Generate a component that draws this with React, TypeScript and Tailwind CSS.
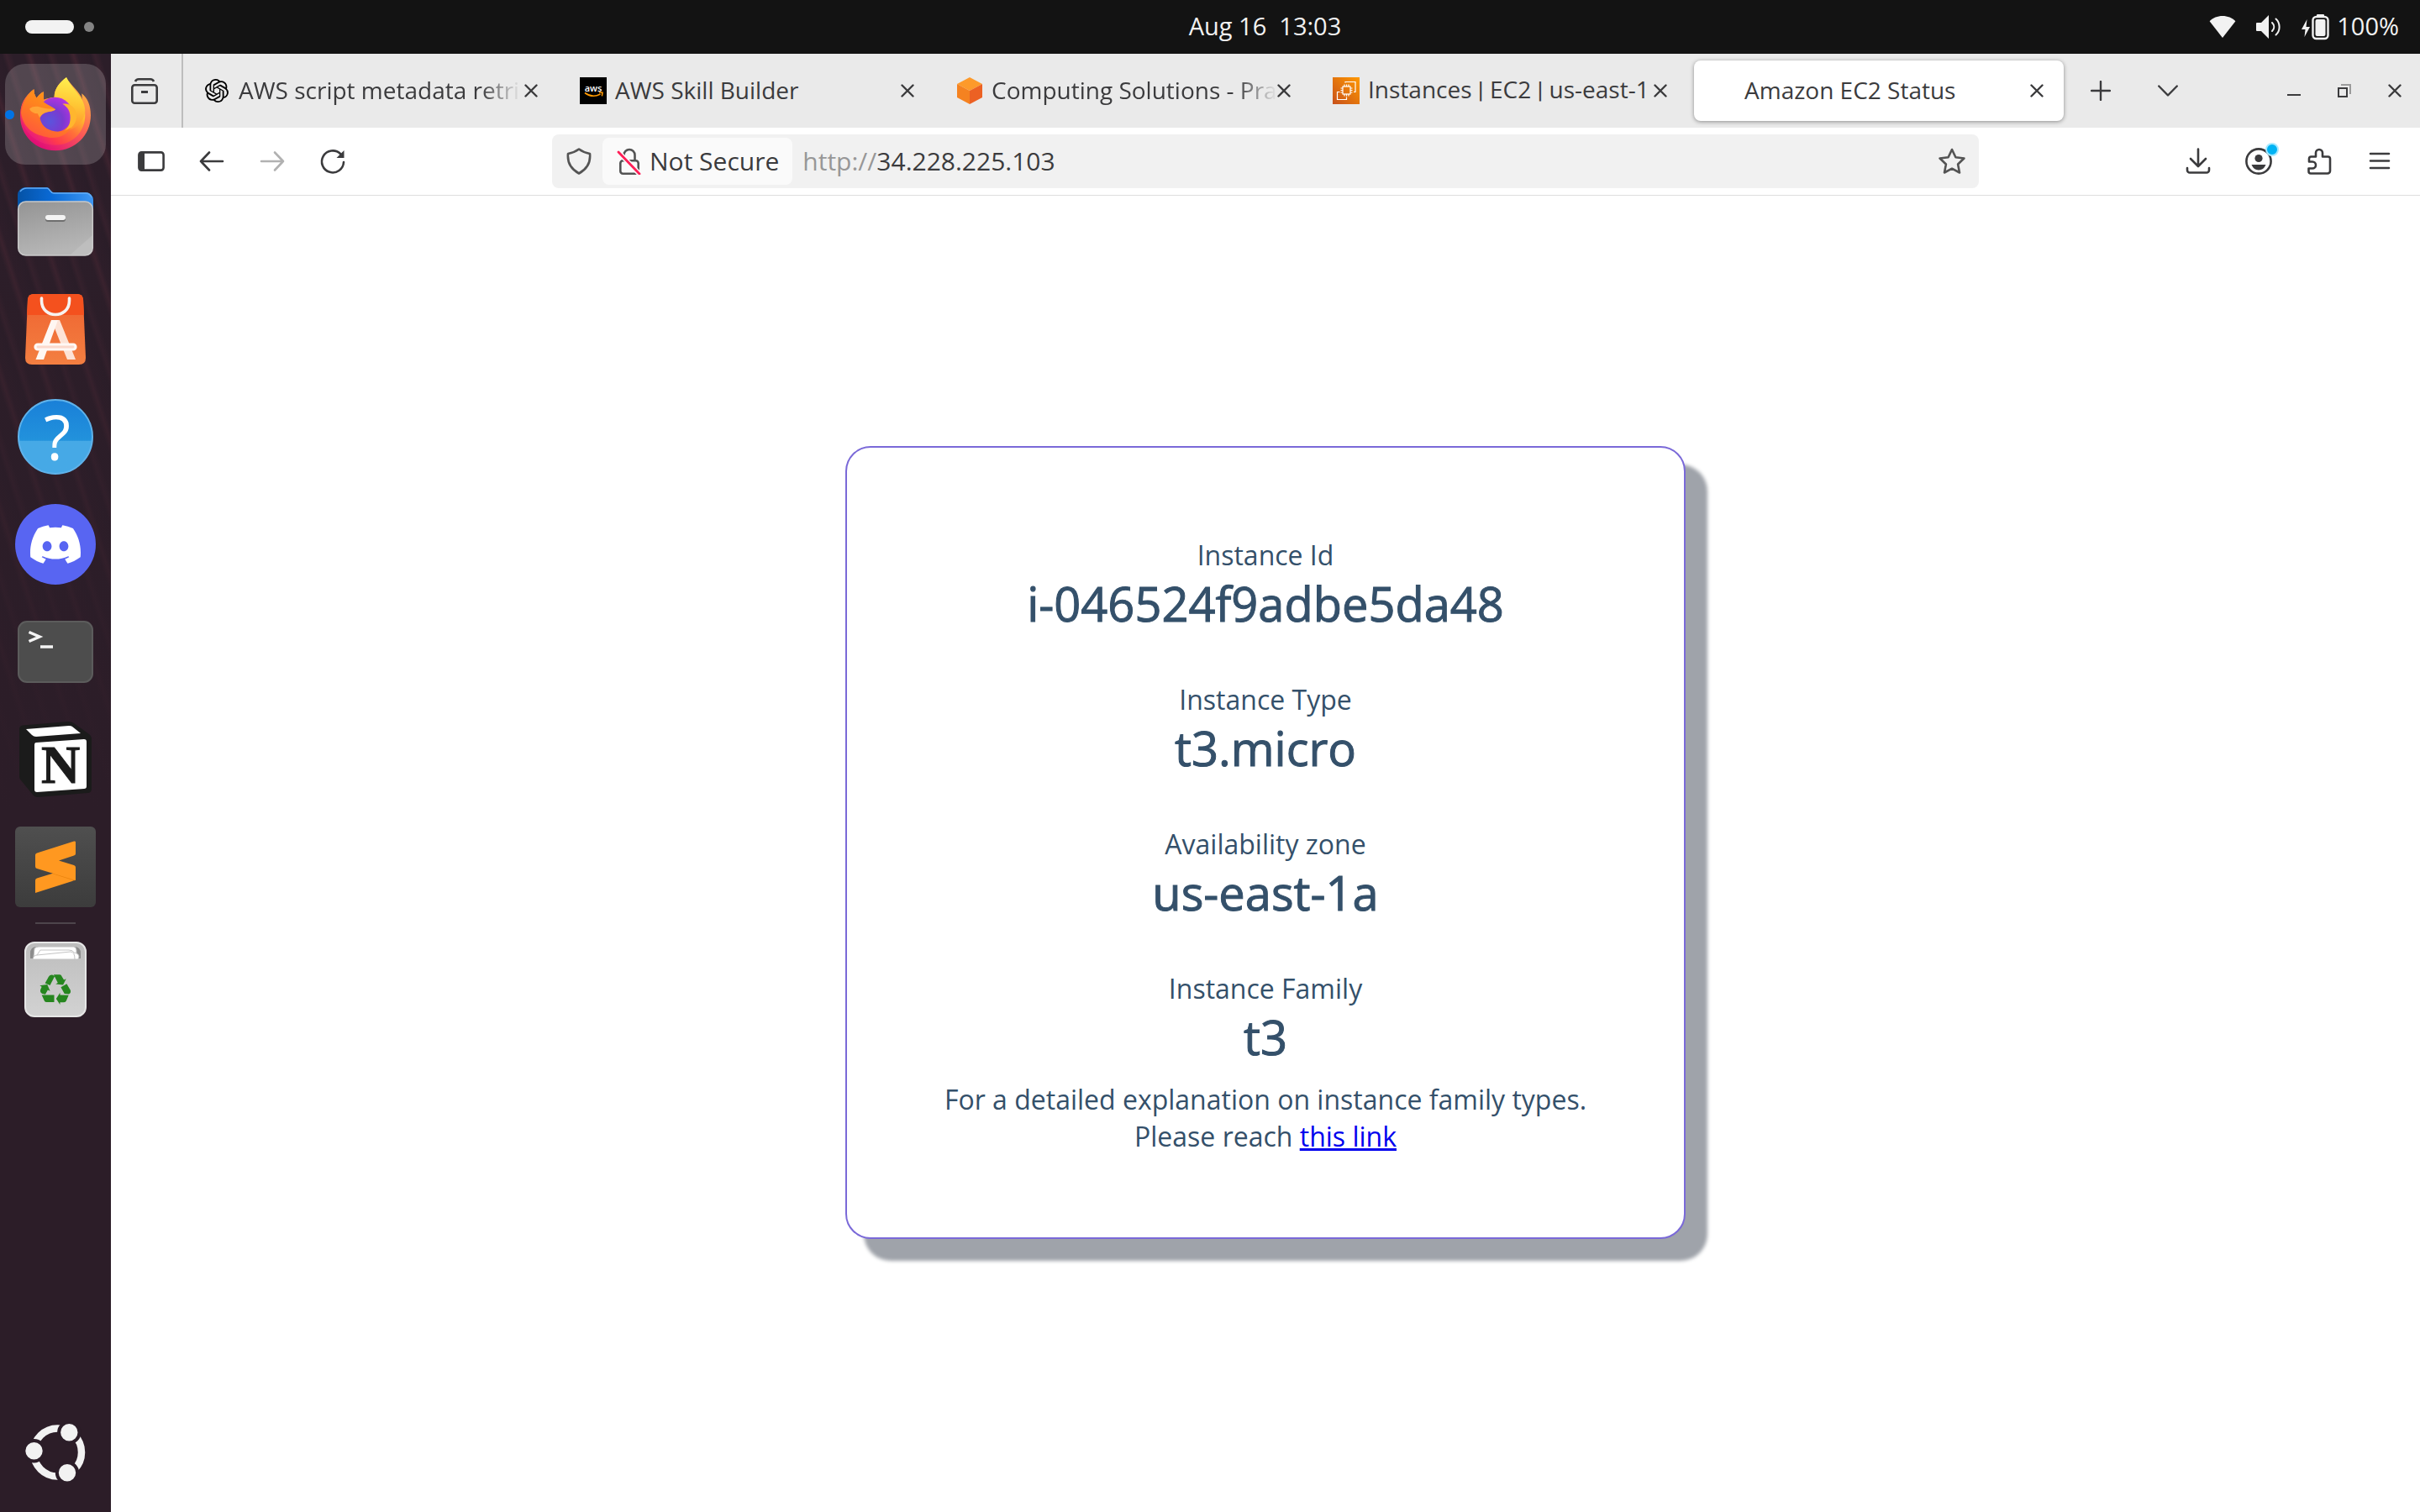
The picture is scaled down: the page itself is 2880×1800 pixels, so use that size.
import type { ReactNode } from "react";
import { SiOpenai, SiDiscord } from "react-icons/si";

const ink = "#3b3b3d";

function CrossIcon() {
  return (
    <svg className="size-4" viewBox="0 0 16 16" fill="none" stroke={ink} strokeWidth="2.4" strokeLinecap="round" aria-hidden="true">
      <path d="M1.5 1.5 14.5 14.5M14.5 1.5 1.5 14.5" />
    </svg>
  );
}

/* ---------- Top bar ---------- */

function TopBar() {
  return (
    <header className="grid h-16 shrink-0 grid-cols-3 items-center bg-[#131313] text-[29px] leading-9 text-[#f2f2f2]">
      <button aria-label="Activities" className="flex items-center gap-3 pl-[30px]">
        <span className="h-4 w-[58px] rounded-full bg-[#f2f2f2]" />
        <span className="size-3 rounded-full bg-[#848484]" />
      </button>
      <button className="justify-self-center pb-0.5 pl-[131px] whitespace-pre">Aug 16  13:03</button>
      <button aria-label="System status" className="flex items-center justify-self-end pr-[25px]">
        <svg className="mr-6 h-[26px] w-8" viewBox="0 0 32 26" fill="#f2f2f2" aria-hidden="true">
          <path d="M16 26 .6 6.2C4.600 2.200 10 0 16 0s11.400 2.200 15.400 6.200Z" />
        </svg>
        <svg className="mr-6 h-[30px] w-[30px]" viewBox="0 0 30 30" fill="none" aria-hidden="true">
          <path d="M1 10h5l9-9v28l-9-9H1a1 1 0 0 1-1-1v-8a1 1 0 0 1 1-1Z" fill="#f2f2f2" />
          <path d="M19 10c3 3 3 7 0 10M23.500 5.500c5.500 5 5.500 14 0 19" stroke="#f2f2f2" strokeWidth="2" strokeLinecap="round" />
        </svg>
        <svg className="mr-2 h-8 w-[34px]" viewBox="0 0 34 32" fill="none" aria-hidden="true">
          <path d="M6.500 7 0 19h4.500L3.500 28 10 16H5.500Z" fill="#f2f2f2" />
          <rect x="18" y="1" width="9" height="4" rx="1" fill="#f2f2f2" />
          <rect x="13.500" y="4" width="18" height="26" rx="4" stroke="#f2f2f2" strokeWidth="2.400" />
          <rect x="16.500" y="7" width="12" height="20" rx="2" fill="#f2f2f2" />
        </svg>
        <span className="pb-0.5">100%</span>
      </button>
    </header>
  );
}

/* ---------- Dock icons ---------- */

function FirefoxIcon() {
  return (
    <svg className="h-[88px] w-[84px]" viewBox="72 92 252 264" aria-hidden="true">
      <defs>
        <linearGradient id="ffBody" x1="0.850" y1="0.100" x2="0.200" y2="0.950">
          <stop offset="0" stopColor="#fff44f" />
          <stop offset="0.300" stopColor="#ffbe2e" />
          <stop offset="0.550" stopColor="#ff7139" />
          <stop offset="0.800" stopColor="#ff3a4c" />
          <stop offset="1" stopColor="#e31587" />
        </linearGradient>
        <radialGradient id="ffGlobe" cx="0.350" cy="0.700" r="0.750">
          <stop offset="0" stopColor="#5b54dc" />
          <stop offset="0.500" stopColor="#7a3ad0" />
          <stop offset="1" stopColor="#b833e1" />
        </radialGradient>
        <linearGradient id="ffFace" x1="0" y1="1" x2="0.600" y2="0">
          <stop offset="0" stopColor="#ff4a45" />
          <stop offset="0.600" stopColor="#ff8020" />
          <stop offset="1" stopColor="#ff9a16" />
        </linearGradient>
        <linearGradient id="ffTail" x1="0.500" y1="0" x2="0.400" y2="1">
          <stop offset="0" stopColor="#fff050" />
          <stop offset="0.500" stopColor="#ffc634" />
          <stop offset="1" stopColor="#ff8a2c" />
        </linearGradient>
        <linearGradient id="ffRim" x1="1" y1="0" x2="0.300" y2="1">
          <stop offset="0" stopColor="#ffd83c" />
          <stop offset="0.500" stopColor="#ff6a50" />
          <stop offset="1" stopColor="#e00a78" />
        </linearGradient>
      </defs>
      <path d="M121 135C88 160 72 192 72 230c0 70 56 124 126 124s126-55 126-126c0-34-11-62-32-78 0 8 1 16 3 22-12-30-40-48-58-79-22 16-43 38-43 70-14 1-26 5-38 9l-1-28c-10 6-18 13-24 22-7-8-10-18-10-31Z" fill="url(#ffRim)" />
      <path d="M121 135C88 160 72 190 74 222c6 64 56 112 122 112 62 0 108-46 108-108 0-58-46-90-67-133-22 16-43 38-43 70-14 1-26 5-38 9l-1-28c-10 6-18 13-24 22-7-8-10-18-10-31Z" fill="url(#ffBody)" />
      <path d="M237 93c-22 16-42 38-43 70 18 2 50 10 62 42 9 28 4 50-14 78 34-12 62-38 62-72-2-52-50-76-67-118Z" fill="url(#ffTail)" />
      <circle cx="197" cy="225" r="62" fill="url(#ffGlobe)" />
      <path d="M223 187c34-4 52 20 50 50-3 28-26 46-50 50 18-10 28-26 28-52 0-22-10-38-28-48Z" fill="#ffb62e" />
      <path d="M121 135c-24 17-42 50-46 84 10 60 50 80 100 88 35 4 65-10 78-36-40 28-100 16-110-31 1-14 12-22 30-25 12-2 23-4 25-9-14-10-28-14-43-26v-36c-10 6-18 13-24 22-7-8-10-18-10-31Z" fill="url(#ffFace)" />
      <path d="M105 205c14-12 32-9 46-4 15 5 30 3 47 5-5 8-20 8-32 11-12 4-19 9-24 19-3-5-6-9-7-14-14-1-24-6-30-17Z" fill="#ffa436" />
    </svg>
  );
}

function FilesIcon() {
  return (
    <svg className="h-[84px] w-[92px]" viewBox="0 0 92 84" aria-hidden="true">
      <defs>
        <linearGradient id="fBack" x1="0" x2="1">
          <stop offset="0" stopColor="#0552a5" />
          <stop offset="0.450" stopColor="#0a6ad6" />
          <stop offset="1" stopColor="#3f97f3" />
        </linearGradient>
        <linearGradient id="fFront" x1="0" y1="0" x2="0.300" y2="1">
          <stop offset="0" stopColor="#949494" />
          <stop offset="1" stopColor="#b6b6b6" />
        </linearGradient>
      </defs>
      <path d="M1 10a9 9 0 0 1 9-9h26c3 0 4 6 8 6h38a9 9 0 0 1 9 9v30H1Z" fill="url(#fBack)" />
      <path d="M4 6q3-4 8-4h24c3 0 4 6 8 6h38q5 0 7 5" fill="none" stroke="#62abf4" strokeWidth="1.500" />
      <rect x="1.700" y="18" width="88.600" height="64" rx="9" fill="url(#fFront)" stroke="#c9c9c9" strokeWidth="1.500" />
      <path d="M64 81 90 58v14q0 9-9 9Z" fill="#fff" opacity="0.120" />
      <rect x="34" y="35" width="24" height="7" rx="3" fill="#6e6e6e" />
      <rect x="34" y="34" width="24" height="6" rx="3" fill="#f4f4f4" />
    </svg>
  );
}

function SoftwareIcon() {
  return (
    <svg className="h-[84px] w-[72px]" viewBox="0 0 72 84" fill="none" aria-hidden="true">
      <defs>
        <linearGradient id="bag" x1="0" y1="0" x2="0" y2="1">
          <stop offset="0" stopColor="#ef6330" />
          <stop offset="1" stopColor="#f37f41" />
        </linearGradient>
      </defs>
      <path d="M10 0h52q6 0 7 6l3 70q0 8-8 8H8q-8 0-8-8L3 6q1-6 7-6Z" fill="url(#bag)" />
      <path d="M10 0h52q6 0 7 6l1 19H2L3 6q1-6 7-6Z" fill="#f4511e" />
      <path d="M19.500 5v3c0 22 33 22 33 0V5" stroke="#f7f3f0" strokeWidth="3.600" strokeLinecap="round" />
      <path d="M32 31h9l19 47h-10L33.500 37Z" fill="#fde3d6" />
      <path d="M31 31h8L22 78h-9.500Z" fill="#fff7f2" />
      <rect x="12" y="60" width="48" height="6" rx="3" fill="#fbd9cc" stroke="#fff8f4" strokeWidth="3.200" />
    </svg>
  );
}

function HelpIcon() {
  return (
    <span className="flex size-[90px] items-center justify-center rounded-full border-2 border-[#5fb2ea] bg-linear-to-b from-[#1a80d8] from-0% via-[#2292dc] via-55% to-[#46a9e6] to-56% pl-1 text-[74px] leading-none text-white">
      ?
    </span>
  );
}

function DiscordIcon() {
  return (
    <span className="flex size-24 items-center justify-center rounded-full bg-[#5865f2] text-white">
      <SiDiscord className="size-[60px]" />
    </span>
  );
}

function TerminalIcon() {
  return (
    <span className="block h-[74px] w-[90px] rounded-[11px] border-2 border-[#5c5c5c] bg-[#4d4d4d]">
      <svg className="size-full" viewBox="0 0 86 70" fill="none" stroke="#f4f4f4" strokeWidth="3.500" aria-hidden="true">
        <path d="M11.500 11.500 24 17l-12.500 5.500M25 29h15" />
      </svg>
    </span>
  );
}

function NotionIcon() {
  return (
    <svg className="h-[90px] w-[86px]" viewBox="0 0 86 90" aria-hidden="true">
      <path d="M4 4.500 58 0q4 0 7 2l18 13q3 2 3 5v60q0 5-5 5L22 90q-4 0-6-3L2 70q-2-2-2-5V9q0-4 4-4.500Z" fill="#1b1b1b" />
      <path d="m8 9 51-4q3 0 4 1l10 8-53 4q-3 0-5-2Z" fill="#fff" />
      <path d="m20 25 57-4q3 0 3 3v53q0 3-3 3l-56 4q-3 0-3-3V28q0-3 2-3Z" fill="#fff" />
      <text x="49" y="73" textAnchor="middle" fontFamily="Liberation Serif, serif" fontWeight="700" fontSize="64" fill="#1b1b1b" stroke="#1b1b1b" strokeWidth="1">N</text>
    </svg>
  );
}

function SublimeIcon() {
  return (
    <span className="flex size-24 items-center justify-center rounded-md bg-linear-to-b from-[#4f4f4f] to-[#3c3c3c]">
      <svg className="h-[62px] w-12" viewBox="0 0 48 62" aria-hidden="true">
        <path d="M0 47q0-2 2-2.500L46 31v15q0 1.500-2 2L0 62Z" fill="#ff9820" />
        <path d="m20 39 26-9q2 8 2 16-1 2-3 1Z" fill="#e9840f" />
        <path d="M0 17q0-2 2-2.500L46 .5q2-.5 2 1V15q0 2-2 2.500L28 23.500l18 5.500q2 .5 2 2.500V47L2 33q-2-.5-2-2.500Z" fill="#ff9820" />
      </svg>
    </span>
  );
}

function TrashIcon() {
  return (
    <span className="relative flex h-[90px] w-[74px] items-center justify-center rounded-[12px] border-2 border-[#e6e6e6] bg-linear-to-b from-[#bdbdbd] to-[#d2d2d2] pt-6">
      <svg className="absolute top-1 left-1 h-[16px] w-[62px]" viewBox="0 0 62 16" aria-hidden="true">
        <path d="M1 8q0-8 8-8h44q8 0 8 8v6H1Z" fill="#8c8c8c" />
        <path d="M6 2q2-2 5-2h42q3 1 3 4v8H5Z" fill="#fff" stroke="#bbb" />
        <path d="M4 15q1-5 5-5l4-6h34q5 0 6 3 6 1 6 5l-1 3Z" fill="#fff" stroke="#c4c4c4" />
        <path d="m9 10 40-4q5 0 5 9" fill="none" stroke="#c4c4c4" />
      </svg>
      <svg className="h-9 w-[38px]" viewBox="143 632 113 109" fill="#26861f" aria-hidden="true">
        <path d="M162 664 175 640Q180 632 190 634L197 638 180 671Z" />
        <path d="M193 633H215Q220 633 223 640L230 652 238 648 227 670 200 667 208 662Z" />
        <path d="M219 678 240 666 253 688Q257 698 248 703L232 702Z" />
        <path d="M247 707 238 728Q235 733 228 733H216V741L202 720 216 698V706Z" />
        <path d="M150 706H195V732H168Q162 732 160 728Z" />
        <path d="M143 672 170 668 180 692 172 688 163 704 152 702Q142 696 146 686L150 677Z" />
      </svg>
    </span>
  );
}

function UbuntuIcon() {
  return (
    <svg className="h-[70px] w-[72px]" viewBox="29 1694 72 70" aria-hidden="true">
      <circle cx="67.500" cy="1729" r="28.500" fill="none" stroke="#f2f2f2" strokeWidth="8.500" />
      <g fill="#f2f2f2" stroke="#2b1d28" strokeWidth="4">
        <circle cx="39.500" cy="1727.300" r="12.200" />
        <circle cx="81.300" cy="1705.300" r="12.200" />
        <circle cx="79" cy="1753.300" r="12.200" />
      </g>
    </svg>
  );
}

function DockItem({ label, active, children }: { label: string; active?: boolean; children: ReactNode }) {
  return (
    <button
      aria-label={label}
      className={
        active
          ? "relative flex size-[120px] items-center justify-center rounded-[24px] bg-white/18"
          : "relative flex size-[120px] items-center justify-center rounded-[24px]"
      }
    >
      {active && <span className="absolute left-0 size-[11px] rounded-full bg-[#0073e5]" />}
      {children}
    </button>
  );
}

function Dock() {
  return (
    <nav
      aria-label="Dock"
      className="flex w-[132px] shrink-0 flex-col items-center gap-2 bg-[#2c1d28] bg-[linear-gradient(to_bottom,transparent,#2c1d28_900px),repeating-linear-gradient(72deg,#2c1e29_0px,#2c1e29_13px,#3f2430_19px,#2e1e2a_24px,#2a1d28_38px,#38222e_43px,#2c1e29_50px)] pt-3 pb-[11px]"
    >
      <DockItem label="Firefox" active><FirefoxIcon /></DockItem>
      <DockItem label="Files"><FilesIcon /></DockItem>
      <DockItem label="App Center"><SoftwareIcon /></DockItem>
      <DockItem label="Help"><HelpIcon /></DockItem>
      <DockItem label="Discord"><DiscordIcon /></DockItem>
      <DockItem label="Terminal"><TerminalIcon /></DockItem>
      <DockItem label="Notion"><NotionIcon /></DockItem>
      <DockItem label="Sublime Text"><SublimeIcon /></DockItem>
      <hr className="-my-0.5 w-12 border-t-2 border-[#4d444b]" />
      <DockItem label="Trash"><TrashIcon /></DockItem>
      <div className="flex-1" />
      <DockItem label="Show Apps"><UbuntuIcon /></DockItem>
    </nav>
  );
}

/* ---------- Tabs ---------- */

function AwsFavicon() {
  return (
    <svg className="size-8" viewBox="0 0 32 32" aria-hidden="true">
      <rect width="32" height="32" fill="#000" />
      <text x="16" y="16.500" textAnchor="middle" fontFamily="Open Sans, sans-serif" fontWeight="600" fontSize="11" fill="#fff">aws</text>
      <path d="M6 18.500c6 4.500 13 4.500 18.500 1.500M23 18l4 .3-.6 4" fill="none" stroke="#ff9900" strokeWidth="1.600" />
    </svg>
  );
}

function CubeFavicon() {
  return (
    <svg className="size-8" viewBox="0 0 32 32" aria-hidden="true">
      <path d="M16 0 31 8 16 16 1 8Z" fill="#fd9a2b" />
      <path d="M1 8 16 16v16L1 24Z" fill="#f58220" />
      <path d="M31 8 16 16v16l15-8Z" fill="#ec6123" />
    </svg>
  );
}

function Ec2Favicon() {
  return (
    <svg className="size-8" viewBox="0 0 32 32" aria-hidden="true">
      <defs>
        <linearGradient id="ec2" x1="0" y1="1" x2="1" y2="0">
          <stop offset="0" stopColor="#c8511b" />
          <stop offset="1" stopColor="#ff9900" />
        </linearGradient>
      </defs>
      <rect width="32" height="32" fill="url(#ec2)" />
      <g fill="none" stroke="#fff" strokeWidth="1.200">
        <rect x="12" y="11" width="9" height="9" />
        <path d="M14 11V8.500M16.500 11V8.500M19 11V8.500M14 20v2.500M16.500 20v2.500M19 20v2.500M12 13H9.500M12 15.500H9.500M12 18H9.500M21 13h2.500M21 15.500h2.500M21 18h2.500" />
        <path d="M15 6.500V5.500h12v12h-2M8.500 17.500H5.500v9h11v-3" />
      </g>
    </svg>
  );
}

/* A slim vertical bar between the parts of a page title */
function Bar() {
  return <span className="font-['Roboto',sans-serif]">|</span>;
}

type TabInfo = { id: string; title: ReactNode; icon?: ReactNode; active?: boolean; faded?: boolean };

const tabs: TabInfo[] = [
  { id: "AWS script", title: "AWS script metadata retri", icon: <SiOpenai className="size-7 text-black" />, faded: true },
  { id: "AWS Skill Builder", title: "AWS Skill Builder", icon: <AwsFavicon /> },
  { id: "Computing Solutions", title: "Computing Solutions - Pra", icon: <CubeFavicon />, faded: true },
  { id: "Instances", title: <>Instances <Bar /> EC2 <Bar /> us-east-1</>, icon: <Ec2Favicon /> },
  { id: "Amazon EC2 Status", title: "Amazon EC2 Status", active: true },
];

function Tab({ id, title, icon, active, faded }: TabInfo) {
  return (
    <div
      className={
        active
          ? "mx-1 flex h-[72px] w-[440px] items-center rounded-lg bg-white pr-6 pl-[18px] shadow-[0_1px_5px_rgba(0,0,0,0.4)]"
          : "mx-1 flex h-[72px] w-[440px] items-center rounded-lg pr-6 pl-[18px]"
      }
    >
      <button role="tab" aria-selected={!!active} className="flex min-w-0 flex-1 items-center gap-[10px] text-left">
        <span className="flex size-8 shrink-0 items-center justify-center">{icon}</span>
        <span
          className={
            faded
              ? "flex-1 pb-0.5 whitespace-nowrap [mask-image:linear-gradient(to_right,black_calc(100%-48px),transparent)]"
              : "flex-1 pb-0.5 whitespace-nowrap"
          }
        >
          {title}
        </span>
      </button>
      <button aria-label={"Close " + id} className="ml-1 shrink-0"><CrossIcon /></button>
    </div>
  );
}

function TabBar() {
  return (
    <div className="flex h-[88px] items-center bg-[#eaeaea]">
      <button aria-label="Recent tabs" className="flex h-full w-[86px] shrink-0 items-center border-r-2 border-[#bdbdbd] pl-6">
        <svg className="size-8" viewBox="0 0 32 32" fill="none" stroke={ink} strokeWidth="2.600" aria-hidden="true">
          <rect x="1.300" y="9.300" width="29.400" height="21.400" rx="3" />
          <path d="M5 5q1-2.700 4-2.700h14q3 0 4 2.700" />
          <path d="M12 17.500h8" strokeWidth="3" />
        </svg>
      </button>
      <div role="tablist" className="flex min-w-0 pl-0.5">
        {tabs.map((t) => (
          <Tab key={t.id} {...t} />
        ))}
      </div>
      <button aria-label="New tab" className="ml-2 flex h-16 w-16 shrink-0 items-center justify-center">
        <svg className="size-6" viewBox="0 0 24 24" fill="none" stroke={ink} strokeWidth="2.400" strokeLinecap="round" aria-hidden="true">
          <path d="M12 1v22M1 12h22" />
        </svg>
      </button>
      <button aria-label="List all tabs" className="ml-4 flex h-16 w-16 shrink-0 items-center justify-center">
        <svg className="h-3.5 w-6" viewBox="0 0 24 14" fill="none" stroke={ink} strokeWidth="2.400" strokeLinecap="round" strokeLinejoin="round" aria-hidden="true">
          <path d="m1.200 1.500 10.800 11 10.800-11" />
        </svg>
      </button>
      <div className="ml-auto flex shrink-0">
        <button aria-label="Minimize" className="flex h-16 w-[60px] items-center justify-center">
          <svg className="size-4" viewBox="0 0 16 16" aria-hidden="true"><path d="M0 12h16v2H0Z" fill={ink} /></svg>
        </button>
        <button aria-label="Restore" className="flex h-16 w-[60px] items-center justify-center">
          <svg className="size-4" viewBox="0 0 16 16" fill="none" strokeWidth="2" aria-hidden="true">
            <path d="M4 1h11v11" stroke="#9b9b9b" />
            <rect x="1" y="5" width="10" height="10" stroke={ink} />
          </svg>
        </button>
        <button aria-label="Close window" className="flex h-16 w-[60px] items-center justify-center"><CrossIcon /></button>
      </div>
    </div>
  );
}

/* ---------- Toolbar ---------- */

function ToolButton({ label, children }: { label: string; children: ReactNode }) {
  return (
    <button aria-label={label} className="relative flex size-16 shrink-0 items-center justify-center">
      <svg className="size-8 overflow-visible" viewBox="0 0 32 32" fill="none" stroke={ink} strokeWidth="2.600" strokeLinecap="round" strokeLinejoin="round" aria-hidden="true">
        {children}
      </svg>
    </button>
  );
}

function Toolbar() {
  return (
    <div className="flex h-[81px] items-center border-b border-[#dedede] bg-white px-4 text-[30px]">
      <div className="flex gap-2">
        <ToolButton label="Sidebar">
          <rect x="1.400" y="5.400" width="29.200" height="21.200" rx="3" />
          <path d="M2 6h6v20H2Z" fill={ink} stroke="none" />
        </ToolButton>
        <ToolButton label="Back"><path d="M3 16h26M13 5.500 3 16l10 10.500" /></ToolButton>
        <ToolButton label="Forward"><path d="M3 16h26M19 5.500 29 16 19 26.500" stroke="#b1b1b1" /></ToolButton>
        <ToolButton label="Reload">
          <path d="M29 17a13 13 0 1 1-4-10" />
          <path d="M29.500 3v9h-9Z" fill={ink} stroke="none" />
        </ToolButton>
      </div>
      <div className="mx-[229px] flex h-16 min-w-0 flex-1 items-center rounded-lg bg-[#f1f1f1] px-4">
        <svg className="size-8 shrink-0" viewBox="0 0 32 32" fill="none" stroke="#545454" strokeWidth="2.600" strokeLinejoin="round" aria-hidden="true">
          <path d="M16 1.500c4 3 8 4.500 13 5.500 1 10-3 18-13 23.500C6 25 2 17 3 7c5-1 9-2.500 13-5.500Z" />
        </svg>
        <button className="ml-3 flex h-14 shrink-0 items-center gap-2 rounded-lg bg-[#fafafa] px-4">
          <svg className="size-8" viewBox="0 0 32 32" fill="none" aria-hidden="true">
            <g stroke="#545454" strokeWidth="2.600">
              <rect x="5.300" y="15.300" width="21.400" height="15.400" rx="3" />
              <path d="M9.500 15V8.500a6.500 6.500 0 0 1 13 0V15" />
            </g>
            <path d="m3 5 25 26" stroke="#fafafa" strokeWidth="6" />
            <path d="m3 5 25 26" stroke="#ff1f57" strokeWidth="2.800" strokeLinecap="round" />
          </svg>
          Not Secure
        </button>
        <label htmlFor="url" className="pl-3 text-[#979797]">http://</label>
        <input id="url" className="min-w-0 flex-1 bg-transparent outline-none" defaultValue="34.228.225.103" />
        <button aria-label="Bookmark" className="shrink-0">
          <svg className="size-8" viewBox="0 0 32 32" fill="none" stroke="#545454" strokeWidth="2.600" strokeLinejoin="round" aria-hidden="true">
            <path d="m16 2 4.400 9.200 10 1.300-7.300 7 1.900 10L16 24.700 7 29.500l1.900-10-7.300-7 10-1.300Z" />
          </svg>
        </button>
      </div>
      <div className="flex gap-2">
        <ToolButton label="Downloads">
          <path d="M16 1.500V21M7 13l9 9 9-9M3 24v2.500a3 3 0 0 0 3 3h20a3 3 0 0 0 3-3V24" />
        </ToolButton>
        <ToolButton label="Account">
          <circle cx="16" cy="16" r="14.600" />
          <circle cx="16" cy="12.500" r="4.600" fill={ink} stroke="none" />
          <path d="M7.500 20h17q-2.500 6.500-8.500 6.500T7.500 20Z" fill={ink} stroke="none" />
          <circle cx="32" cy="2" r="7" fill="#00b3f4" stroke="#a8e9ff" strokeWidth="2" />
        </ToolButton>
        <ToolButton label="Extensions">
          <path d="M6 30.500h20a3 3 0 0 0 3-3V13a2.500 2.500 0 0 0-2.500-2.500H20V6a4 4 0 0 0-8 0v4.500H6.500A2.500 2.500 0 0 0 4 13v3.500h4a4 4 0 0 1 0 8H3.500V28A2.500 2.500 0 0 0 6 30.500Z" />
        </ToolButton>
        <ToolButton label="Menu"><path d="M5 7h22M5 15.500h22M5 24h22" /></ToolButton>
      </div>
    </div>
  );
}

/* ---------- Page ---------- */

const fields = [
  { label: "Instance Id", value: "i-046524f9adbe5da48" },
  { label: "Instance Type", value: "t3.micro" },
  { label: "Availability zone", value: "us-east-1a" },
  { label: "Instance Family", value: "t3" },
];

function StatusPage() {
  return (
    <main className="flex flex-1 items-center justify-center bg-white pb-7">
      <section className="w-[1000px] max-w-full rounded-[30px] border-2 border-[#7a69d8] bg-white px-8 pt-[106px] pb-[98px] text-center text-[32px] leading-[44px] text-[#34506a] shadow-[24px_24px_4px_2px_#9fa3aa]">
        <dl className="flex flex-col gap-[58px]">
          {fields.map((f) => (
            <div key={f.label}>
              <dt>{f.label}</dt>
              <dd className="text-[56px] leading-[70px] [-webkit-text-stroke:1px_#34506a]">{f.value}</dd>
            </div>
          ))}
        </dl>
        <p className="mt-[18px]">
          For a detailed explanation on instance family types.
          <br />
          Please reach <a href="#instance-types" className="text-[#0000ee] underline">this link</a>
        </p>
      </section>
    </main>
  );
}

export default function App() {
  return (
    <div className="flex min-h-screen flex-col bg-white font-['Open_Sans',sans-serif]">
      <TopBar />
      <div className="flex flex-1">
        <Dock />
        <div className="flex min-w-0 flex-1 flex-col">
          <div className="text-[28px] leading-9 text-[#3b3b3d]">
            <TabBar />
            <Toolbar />
          </div>
          <StatusPage />
        </div>
      </div>
    </div>
  );
}
